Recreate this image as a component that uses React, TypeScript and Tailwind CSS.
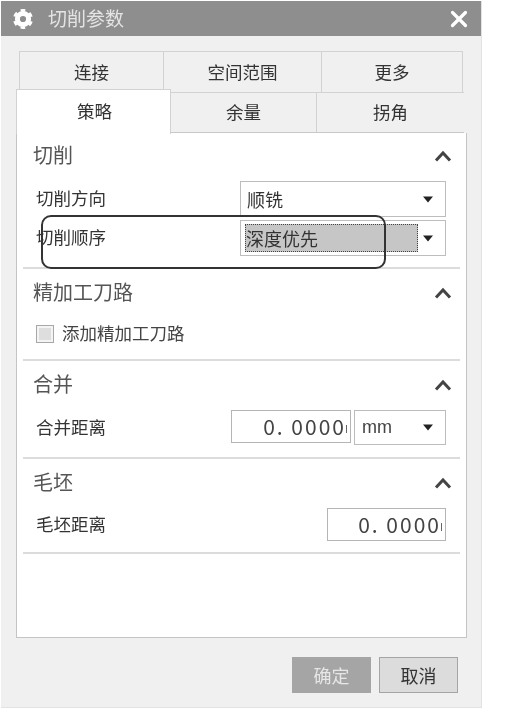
import React from "react";
import { X } from "lucide-react";

const Caret = () => (
  <svg width="12" height="7" viewBox="0 0 12 7" className="shrink-0">
    <path d="M1 0.5 H11 L6 6.5 Z" fill="#222" />
  </svg>
);

const Chevron = () => (
  <svg width="18" height="12" viewBox="0 0 18 12" className="shrink-0">
    <path d="M2 10.5 L9 3 L16 10.5" fill="none" stroke="#444" strokeWidth="3" />
  </svg>
);

const Gear = () => (
  <svg width="22" height="22" viewBox="0 0 22 22" className="shrink-0">
    <circle cx="11" cy="11" r="5.6" fill="none" stroke="#fff" strokeWidth="5" />
    <circle cx="11" cy="11" r="8.8" fill="none" stroke="#fff" strokeWidth="2.4" strokeDasharray="4.6 4.6" transform="rotate(-105 11 11)" />
  </svg>
);

const SectionHead = ({ title }: { title: string }) => (
  <div className="flex h-[24px] items-center justify-between pl-[10px] pr-[8px]">
    <span className="pb-[3px] text-[20px] leading-none text-[#555]">{title}</span>
    <Chevron />
  </div>
);

const Select = ({ value, active }: { value: string; active?: boolean }) => (
  <div className="flex h-[36px] w-[206px] items-center justify-between border border-[#bdbdbd] bg-white pl-[4px] pr-[11px]">
    {active ? (
      <span className="flex h-[28px] w-[173px] items-center border border-dotted border-[#444] bg-[#c6c6c6] text-[18px] text-[#333]">
        {value}
      </span>
    ) : (
      <span className="pl-[2px] text-[18px] text-[#333]">{value}</span>
    )}
    <Caret />
  </div>
);

const NumberInput = ({ width }: { width: string }) => (
  <div className={`flex h-[33px] items-center justify-end overflow-hidden border border-[#b5b5b5] bg-white pr-[3px] ${width}`}>
    <span className="whitespace-nowrap text-[21px] tracking-[2px] text-[#444]">
      0. 0000
      <span className="inline-block h-[8px] w-[1px] bg-[#666] align-middle" />
    </span>
  </div>
);

const Row = ({ label, children }: { label: string; children: React.ReactNode }) => (
  <div className="flex items-center justify-between pl-[13px] pr-[14px]">
    <span className="pb-[2px] text-[17.5px] leading-none text-[#333]">{label}</span>
    {children}
  </div>
);

const Tab = ({ label, width }: { label: string; width: string }) => (
  <div className={`flex items-center justify-center border-r border-[#d2d2d2] text-[17.5px] text-[#333] last:border-r-0 ${width}`}>
    {label}
  </div>
);

export default function App() {
  return (
    <div className="h-[719px] w-[506px] bg-white pl-px pt-px font-['Noto_Sans_CJK_SC','Liberation_Sans',sans-serif] blur-[0.4px]">
      <div className="relative flex h-[707px] w-[481px] flex-col border-r border-b border-[#e2e2e2] bg-[#f0f0f0]">
        {/* title bar */}
        <div className="flex h-[35px] shrink-0 items-center bg-[#8e8e8e] pl-[11px] pr-[9px]">
          <Gear />
          <span className="ml-[14px] text-[19px] text-[#e4e4e4]">切削参数</span>
          <X className="ml-auto text-white" size={26} strokeWidth={3} />
        </div>

        {/* tabs */}
        <div className="ml-[18px] mt-[15px] flex h-[41px] w-[444px] border border-b-0 border-[#d2d2d2]">
          <Tab label="连接" width="w-[144px]" />
          <Tab label="空间范围" width="w-[158px]" />
          <Tab label="更多" width="flex-1" />
        </div>
        <div className="relative z-10 ml-[15px] flex h-[41px] w-[448px] border-b border-[#c8c8c8]">
          <div className="-mt-[3px] flex h-[45px] w-[155px] items-center justify-center border-x border-t border-[#d2d2d2] bg-white pb-[2px] pl-[2px] text-[17.5px] text-[#333]">
            策略
          </div>
          <div className="flex flex-1 border-t border-[#d2d2d2]">
            <Tab label="余量" width="w-[146px]" />
            <Tab label="拐角" width="flex-1" />
          </div>
        </div>

        {/* panel */}
        <div className="ml-[15px] flex h-[505px] w-[451px] flex-col border-x border-b border-[#c4c4c4] bg-white px-[6px]">
          <section className="h-[136px] border-b-2 border-[#dcdcdc] pt-[11px]">
            <SectionHead title="切削" />
            <div className="mt-[13px] flex flex-col gap-[3px]">
              <Row label="切削方向">
                <Select value="顺铣" />
              </Row>
              <Row label="切削顺序">
                <Select value="深度优先" active />
              </Row>
            </div>
          </section>

          <section className="h-[92px] border-b-2 border-[#dcdcdc] pt-[12px]">
            <SectionHead title="精加工刀路" />
            <div className="mt-[19px] flex items-center pl-[13px]">
              <span className="h-[18px] w-[18px] border border-[#a8a8a8] bg-[#dedede] shadow-[inset_0_0_0_2px_#f4f4f4]" />
              <span className="ml-[8px] pb-[2px] text-[17.5px] leading-none text-[#444]">添加精加工刀路</span>
            </div>
          </section>

          <section className="h-[98px] border-b-2 border-[#dcdcdc] pt-[12px]">
            <SectionHead title="合并" />
            <div className="mt-[13px]">
              <Row label="合并距离">
                <div className="flex items-start gap-[3px]">
                  <NumberInput width="w-[120px]" />
                  <div className="flex h-[35px] w-[92px] items-center justify-between border border-[#bdbdbd] bg-white pl-[7px] pr-[11px]">
                    <span className="font-['Liberation_Sans',sans-serif] text-[18px] text-[#444]">mm</span>
                    <Caret />
                  </div>
                </div>
              </Row>
            </div>
          </section>

          <section className="h-[95px] border-b-2 border-[#dcdcdc] pt-[12px]">
            <SectionHead title="毛坯" />
            <div className="mt-[13px]">
              <Row label="毛坯距离">
                <NumberInput width="w-[119px]" />
              </Row>
            </div>
          </section>
        </div>

        {/* footer buttons */}
        <div className="mt-[19px] flex justify-end gap-[8px] pr-[23px]">
          <div className="flex h-[36px] w-[79px] items-center justify-center bg-[#a5a5a5] text-[18px] text-[#e6e6e6]">确定</div>
          <div className="flex h-[36px] w-[79px] items-center justify-center border border-[#a5a5a5] bg-[#dcdcdc] text-[18px] text-[#333]">取消</div>
        </div>

        {/* hand-drawn annotation over the order row */}
        <div className="absolute left-[40px] top-[214px] h-[54px] w-[345px] rounded-[10px] border-2 border-[#333]" />
      </div>
    </div>
  );
}
